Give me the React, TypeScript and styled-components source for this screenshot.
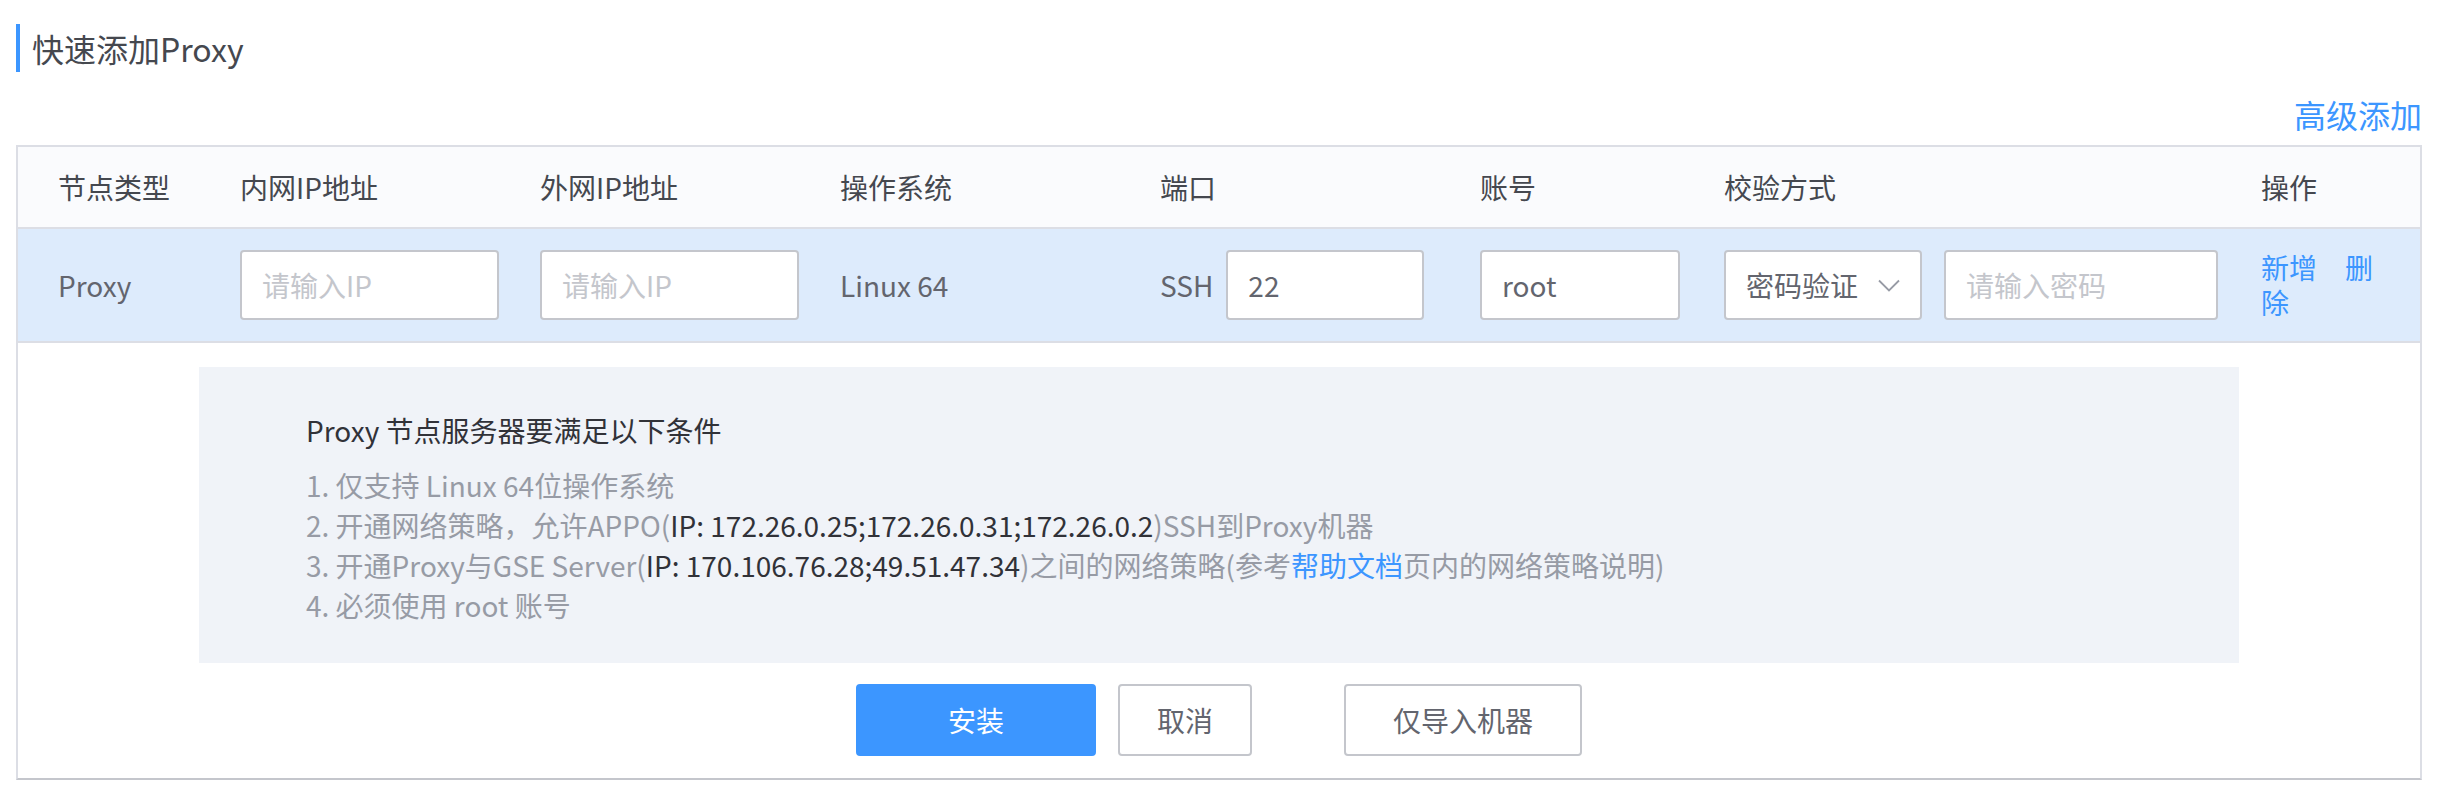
import React from "react";
import styled, { createGlobalStyle } from "styled-components";

const GlobalStyle = createGlobalStyle`
  html, body {
    margin: 0;
    padding: 0;
    background: #fff;
  }
  body {
    font-family: "Noto Sans CJK SC", "Noto Sans", sans-serif;
  }
  * {
    box-sizing: border-box;
  }
`;

const Page = styled.div`
  width: 2438px;
  padding: 24px 16px 0;
`;

const Title = styled.h1`
  margin: 0;
  height: 48px;
  line-height: 48px;
  padding-left: 12px;
  border-left: 4px solid #3c96ff;
  font-size: 32px;
  font-weight: 400;
  color: #45484f;
`;

const TopLinkRow = styled.div`
  display: flex;
  justify-content: flex-end;
  margin: 24px 0 13px;
  height: 36px;
  line-height: 36px;
`;

const Link = styled.a<{ $size?: number }>`
  color: #3c96ff;
  font-size: ${(p) => p.$size ?? 28}px;
  text-decoration: none;
  cursor: pointer;
`;

const Table = styled.div`
  border: 2px solid #dcdee5;
  border-bottom-color: #c4c6cc;
`;

const Row = styled.div<{ $head?: boolean }>`
  display: grid;
  grid-template-columns: 182px 300px 300px 320px 320px 244px 537px 1fr;
  align-items: center;
  padding-left: 40px;
  min-height: ${(p) => (p.$head ? 82 : 114)}px;
  border-bottom: 2px solid #dcdee5;
  background: ${(p) => (p.$head ? "#fafbfd" : "#ddebfc")};
  color: ${(p) => (p.$head ? "#45484f" : "#63656e")};
  font-size: 28px;
`;

const Cell = styled.div`
  display: flex;
  align-items: center;
  gap: 13px;
`;

const ActionCell = styled.div`
  padding-right: 30px;
  line-height: 35px;
  color: #3c96ff;
`;

const ActionLink = styled.span<{ $first?: boolean }>`
  margin-left: ${(p) => (p.$first ? 0 : 28)}px;
  cursor: pointer;
`;

const Input = styled.input<{ $w: number }>`
  width: ${(p) => p.$w}px;
  height: 70px;
  padding: 0 20px;
  border: 2px solid #c4c6cc;
  border-radius: 4px;
  background: #fff;
  font-family: inherit;
  font-size: 28px;
  color: #63656e;
  outline: none;
  &::placeholder {
    color: #c4c6cc;
  }
`;

const Select = styled.div`
  width: 198px;
  height: 70px;
  display: flex;
  align-items: center;
  justify-content: space-between;
  padding: 0 20px;
  border: 2px solid #c4c6cc;
  border-radius: 4px;
  background: #fff;
  color: #63656e;
  font-size: 28px;
`;

const Details = styled.div`
  padding: 24px 0 22px;
`;

const InfoBox = styled.div`
  margin: 0 181px;
  padding: 43px 107px 38px;
  background: #f0f3f8;
  font-size: 28px;
`;

const InfoTitle = styled.div`
  line-height: 40px;
  color: #313238;
  margin-bottom: 15px;
`;

const InfoLine = styled.div`
  line-height: 40px;
  color: #979ba5;
  white-space: nowrap;
`;

const Strong = styled.span`
  color: #313238;
`;

const Buttons = styled.div`
  display: flex;
  justify-content: center;
  margin-top: 21px;
`;

const Button = styled.button<{ $primary?: boolean; $w: number; $gap?: number }>`
  width: ${(p) => p.$w}px;
  height: 72px;
  margin-left: ${(p) => p.$gap ?? 0}px;
  border: 2px solid ${(p) => (p.$primary ? "#3c96ff" : "#c4c6cc")};
  border-radius: 4px;
  background: ${(p) => (p.$primary ? "#3c96ff" : "#fff")};
  color: ${(p) => (p.$primary ? "#fff" : "#63656e")};
  font-family: inherit;
  font-size: 28px;
  cursor: pointer;
`;

const headers = ["节点类型", "内网IP地址", "外网IP地址", "操作系统", "端口", "账号", "校验方式", "操作"];

function Chevron() {
  return (
    <svg width="22" height="13" viewBox="0 0 22 13" fill="none">
      <path d="M1 1.5 L11 11.5 L21 1.5" stroke="#979ba5" strokeWidth="1.8" />
    </svg>
  );
}

export default function App() {
  return (
    <>
      <GlobalStyle />
      <Page>
        <Title>快速添加Proxy</Title>
        <TopLinkRow>
          <Link $size={32}>高级添加</Link>
        </TopLinkRow>
        <Table>
          <Row $head>
            {headers.map((h) => (
              <Cell key={h}>{h}</Cell>
            ))}
          </Row>
          <Row>
            <Cell>Proxy</Cell>
            <Cell>
              <Input $w={259} placeholder="请输入IP" />
            </Cell>
            <Cell>
              <Input $w={259} placeholder="请输入IP" />
            </Cell>
            <Cell>Linux 64</Cell>
            <Cell>
              SSH
              <Input $w={198} defaultValue="22" />
            </Cell>
            <Cell>
              <Input $w={200} defaultValue="root" />
            </Cell>
            <Cell>
              <Select>
                密码验证
                <Chevron />
              </Select>
              <Input $w={274} placeholder="请输入密码" style={{ marginLeft: 9 }} />
            </Cell>
            <ActionCell>
              <ActionLink $first>新增</ActionLink>
              <ActionLink>删除</ActionLink>
            </ActionCell>
          </Row>
          <Details>
            <InfoBox>
              <InfoTitle>Proxy 节点服务器要满足以下条件</InfoTitle>
              <InfoLine>1. 仅支持 Linux 64位操作系统</InfoLine>
              <InfoLine>
                2. 开通网络策略，允许APPO(<Strong>IP: 172.26.0.25;172.26.0.31;172.26.0.2</Strong>)SSH到Proxy机器
              </InfoLine>
              <InfoLine>
                3. 开通Proxy与GSE Server(<Strong>IP: 170.106.76.28;49.51.47.34</Strong>)之间的网络策略(参考
                <Link>帮助文档</Link>页内的网络策略说明)
              </InfoLine>
              <InfoLine>4. 必须使用 root 账号</InfoLine>
            </InfoBox>
            <Buttons>
              <Button $primary $w={240}>安装</Button>
              <Button $w={134} $gap={22}>取消</Button>
              <Button $w={238} $gap={92}>仅导入机器</Button>
            </Buttons>
          </Details>
        </Table>
      </Page>
    </>
  );
}
